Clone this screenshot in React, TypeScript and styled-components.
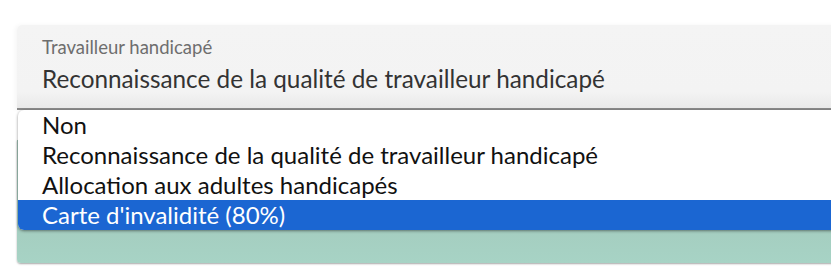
import React from "react";
import styled, { createGlobalStyle } from "styled-components";

const Global = createGlobalStyle`
  html, body {
    margin: 0;
    background: #ffffff;
    overflow: hidden;
  }
  body {
    font-family: Lato, "Noto Sans", sans-serif;
  }
`;

const Page = styled.div`
  padding: 25px 0 0 17px;
  width: 900px;
  height: 270px;
  box-sizing: border-box;
  position: relative;
`;

const Field = styled.div`
  background: linear-gradient(#f4f4f4 0%, #f3f3f3 80%, #e9e9e9 100%);
  border-top-left-radius: 5px;
  border-bottom: 2px solid #8a8a8a;
  padding: 10px 0 0 25px;
  height: 73px;
  box-shadow: -2px 0 4px rgba(0, 0, 0, 0.04);
`;

const Label = styled.div`
  font-size: 18.5px;
  line-height: 24px;
  color: #6e6e6e;
`;

const Value = styled.div`
  font-size: 24.3px;
  line-height: 30px;
  margin-top: 5px;
  color: #333333;
`;

const Submit = styled.div`
  margin-top: 30px;
  height: 123px;
  border-radius: 0 0 0 4px;
  background: linear-gradient(#9ebfb2 0%, #a7d3c5 100%);
  box-shadow: 0 1px 2px rgba(0, 0, 0, 0.35);
`;

const ListBox = styled.ul`
  position: absolute;
  top: 110px;
  left: 18px;
  width: 900px;
  margin: 0;
  padding: 0;
  list-style: none;
  background: #ffffff;
  border-radius: 6px 0 0 6px;
  overflow: hidden;
  box-shadow: 0 1px 3px rgba(0, 0, 0, 0.45);
`;

const Option = styled.li<{ $selected?: boolean }>`
  height: 30px;
  line-height: 30px;
  padding-left: 24px;
  font-size: 24px;
  color: ${(p) => (p.$selected ? "#ffffff" : "#111111")};
  background: ${(p) => (p.$selected ? "#1b66d2" : "transparent")};
`;

const options = [
  "Non",
  "Reconnaissance de la qualité de travailleur handicapé",
  "Allocation aux adultes handicapés",
  "Carte d'invalidité (80%)",
];

export default function App() {
  return (
    <Page>
      <Global />
      <Field>
        <Label>Travailleur handicapé</Label>
        <Value>Reconnaissance de la qualité de travailleur handicapé</Value>
      </Field>
      <Submit />
      <ListBox>
        {options.map((o, i) => (
          <Option key={o} $selected={i === 3}>
            {o}
          </Option>
        ))}
      </ListBox>
    </Page>
  );
}
